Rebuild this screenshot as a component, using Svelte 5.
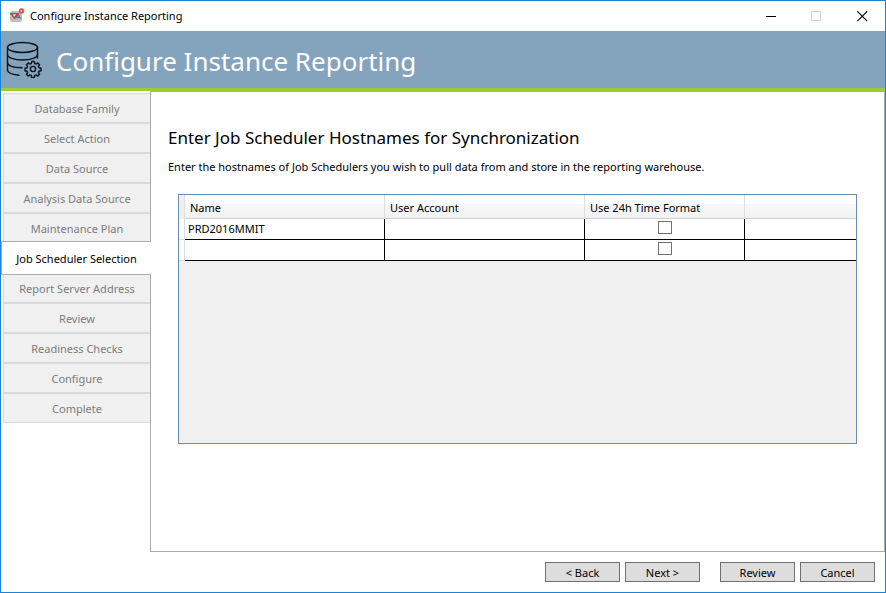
<script>
  const steps = [
    'Database Family', 'Select Action', 'Data Source', 'Analysis Data Source',
    'Maintenance Plan', 'Job Scheduler Selection', 'Report Server Address',
    'Review', 'Readiness Checks', 'Configure', 'Complete'
  ];
  const current = 'Job Scheduler Selection';
  let rows = $state([
    { name: 'PRD2016MMIT', account: '', h24: false },
    { name: '', account: '', h24: false }
  ]);
</script>

<div class="window">
  <div class="titlebar">
    <svg class="appicon" width="16" height="16" viewBox="0 0 16 16" aria-hidden="true">
      <rect x="1" y="3" width="12" height="11" rx="2" fill="#bdbdbd" />
      <path d="M2 5.700H8.500L5.300 10.200Z" fill="#e9d4d2" stroke="#c93b3b" stroke-width="1.300" />
      <path d="M6.500 10.500l2.500-4.500 2.500 4.500M8 9.300h3" fill="none" stroke="#5d6b7a" stroke-width="1.200" />
      <circle cx="12.500" cy="3" r="1.900" fill="#ffc9c9" stroke="#f04b4f" stroke-width="1.700" />
    </svg>
    <span class="caption">Configure Instance Reporting</span>
    <button class="winbtn" aria-label="Minimize">
      <svg width="11" height="11" viewBox="0 0 11 11"><path d="M1 5.500H11" stroke="#000" /></svg>
    </button>
    <button class="winbtn" aria-label="Maximize" disabled>
      <svg width="11" height="11" viewBox="0 0 11 11"><path d="M.5.5h9v9h-9z" fill="none" stroke="#ccc" /></svg>
    </button>
    <button class="winbtn" aria-label="Close">
      <svg width="11" height="11" viewBox="0 0 11 11"><path d="M.3.3l9.900 9.900M10.200.3L.3 10.200" stroke="#000" stroke-width="1.100" /></svg>
    </button>
  </div>

  <header>
    <svg width="36" height="37" viewBox="0 0 36 37" fill="none" stroke="#0d1217" stroke-width="1.400" stroke-linecap="round" aria-hidden="true">
      <ellipse cx="16.500" cy="6.500" rx="15" ry="5" />
      <path d="M1.500 6.500V29c0 2.800 5 4.600 11.500 5.200" />
      <path d="M31.500 6.500V17" />
      <path d="M1.500 13.500c0 3.200 6.500 5.500 15 5.500s15-2.300 15-5.500" />
      <path d="M1.500 21.500c0 3 6 5 14.500 5.300" />
      <circle cx="27" cy="28" r="2.600" />
      <path stroke-linejoin="round" d="M25.700 20.500h2.600l.4 2.100 1.300.5 1.800-1.200 1.800 1.800-1.200 1.800.5 1.300 2.100.4v2.600l-2.100.4-.5 1.300 1.200 1.800-1.800 1.800-1.800-1.200-1.300.5-.4 2.100h-2.600l-.4-2.100-1.300-.5-1.800 1.200-1.800-1.800 1.200-1.800-.5-1.300-2.100-.4v-2.600l2.100-.4.5-1.300-1.200-1.800 1.800-1.800 1.800 1.200 1.300-.5z" />
    </svg>
    <h1>Configure Instance Reporting</h1>
  </header>

  <div class="body">
    <nav aria-label="Steps">
      {#each steps as step}
        <button class="step" class:active={step === current} disabled={step !== current}
          aria-current={step === current ? 'step' : undefined}>{step}</button>
      {/each}
    </nav>

    <main>
      <h2>Enter Job Scheduler Hostnames for Synchronization</h2>
      <p>Enter the hostnames of Job Schedulers you wish to pull data from and store in the reporting warehouse.</p>
      <div class="grid">
        <table>
          <colgroup><col class="c0" /><col class="c1" /><col class="c1" /><col class="c2" /><col /></colgroup>
          <thead>
            <tr><td></td><th>Name</th><th>User Account</th><th>Use 24h Time Format</th><td></td></tr>
          </thead>
          <tbody>
            {#each rows as row}
              <tr>
                <td class="rowhead"></td>
                <td>{row.name}</td>
                <td>{row.account}</td>
                <td class="check"><input type="checkbox" aria-label="Use 24h Time Format" bind:checked={row.h24} /></td>
                <td></td>
              </tr>
            {/each}
          </tbody>
        </table>
      </div>
    </main>
  </div>

  <footer>
    <button>&lt; Back</button>
    <button>Next &gt;</button>
    <button class="apart">Review</button>
    <button>Cancel</button>
  </footer>
</div>

<style>
  :global(body) { margin: 0; }
  .window, .window * { box-sizing: border-box; }
  .window {
    display: flex;
    flex-direction: column;
    min-height: 100vh;
    border: 1px solid #1883d7;
    background: #fff;
    color: #000;
    font: 11px/16px "Noto Sans", "Open Sans", sans-serif;
  }
  button { font: inherit; color: inherit; padding: 0; }
  .titlebar { display: flex; align-items: center; height: 30px; }
  .appicon { margin: 0 5px 0 8px; }
  .caption { flex: 1; }
  .winbtn {
    display: flex;
    align-items: center;
    justify-content: center;
    width: 46px;
    height: 30px;
    border: 0;
    background: none;
  }
  header {
    display: flex;
    align-items: center;
    gap: 14px;
    height: 60px;
    padding-left: 5px;
    border-bottom: 3px solid #9acd32;
    background: #84a3bd;
  }
  h1 { margin: 0; padding-top: 2px; color: #fff; font-size: 26px; line-height: 36px; font-weight: 400; }
  .body { display: flex; flex: 1; }
  nav { display: flex; flex-direction: column; width: 149px; padding: 2px 0 0 2px; }
  .step {
    height: 30px;
    padding-top: 2px;
    border: 1px solid #d9d9d9;
    border-right: 0;
    background: #f0f0f0;
    color: #7c7c7c;
    text-align: center;
  }
  .step.active {
    position: relative;
    height: 34px;
    margin: -2px -1px -2px -2px;
    border-color: #acacac;
    background: #fff;
    color: #000;
  }
  main {
    display: flex;
    flex-direction: column;
    flex: 1;
    min-width: 0;
    padding: 33px 27px 107px 17px;
    border: 1px solid #acacac;
  }
  h2 { margin: 0; font-size: 17px; line-height: 26px; font-weight: 400; }
  p { margin: 8px 0 19px; }
  .grid { flex: 1; min-height: 100px; margin-left: 10px; border: 1px solid #688caf; background: #f0f0f0; }
  table { width: 100%; table-layout: fixed; border-collapse: separate; border-spacing: 0; }
  .c0 { width: 6px; }
  .c1 { width: 200px; }
  .c2 { width: 160px; }
  th, td { padding: 0; text-align: left; font-weight: 400; }
  thead th, thead td {
    height: 24px;
    padding: 2px 0 0 5px;
    border-right: 1px solid #dedede;
    border-bottom: 1px solid #d0d0d0;
    background: linear-gradient(#fff 0, #fff 40%, #f7f8fa 40%, #f1f2f4 100%);
  }
  thead td:first-child { padding: 0; border-bottom-color: #f0f0f0; background: #f0f0f0; }
  thead td:last-child { border-right: 0; }
  tbody td {
    height: 21px;
    padding: 0 0 1px 3px;
    border-right: 1px solid #000;
    border-bottom: 1px solid #000;
    background: #fff;
  }
  tbody td:last-child { border-right: 0; }
  tbody td.rowhead { padding: 0; border-color: #dcdcdc; }
  tbody td.check { padding: 0; text-align: center; }
  input {
    display: block;
    appearance: none;
    width: 14px;
    height: 13px;
    margin: 0 auto 3px;
    border: 1px solid #707070;
    background: #fff;
  }
  input:checked { background: #707070; }
  footer { display: flex; justify-content: flex-end; gap: 5px; padding: 10px; }
  footer button { width: 75px; height: 20px; padding-top: 1px; border: 1px solid #707070; background: #ddd; }
  .apart { margin-left: 15px; }
</style>
